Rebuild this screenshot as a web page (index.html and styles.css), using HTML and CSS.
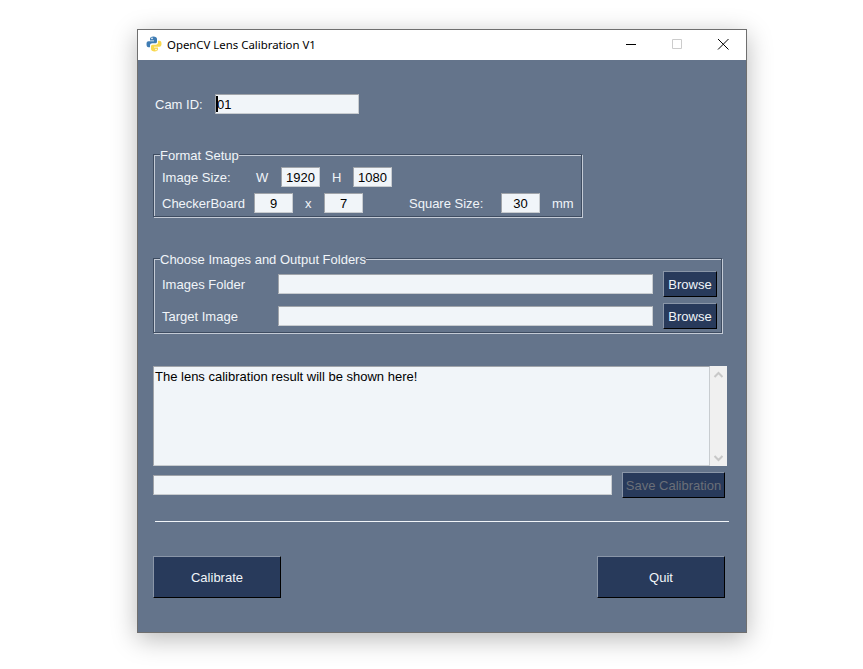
FILE: index.html
```html
<!DOCTYPE html>
<html lang="en">
<head>
    <meta charset="UTF-8">
    <meta name="viewport" content="width=device-width, initial-scale=1.0">
    <title>OpenCV Lens Calibration V1</title>
    <link rel="stylesheet" href="styles.css">
</head>
<body>
    <div class="window">
        <div class="titlebar">
            <svg class="app-icon" width="16" height="16" viewBox="0 0 16 16">
                <path fill="#3f7cb3" d="M7.5 0.5C5 0.5 4 1.5 4 3v1.500h4v0.800H2.500C1 5.300 0.500 6.500 0.500 8.200c0 1.800 0.700 3 2 3H4V9.500c0-1.300 1-2.200 2.300-2.200h3C10.500 7.300 11 6.500 11 5.500V3c0-1.500-1.500-2.500-3.500-2.500z"/>
                <path fill="#f9d84e" d="M8.500 15.500c2.500 0 3.500-1 3.500-2.500v-1.500H8v-0.800h5.500c1.500 0 2-1.200 2-2.900 0-1.800-0.700-3-2-3H12v1.700c0 1.300-1 2.200-2.300 2.200h-3C5.500 8.700 5 9.500 5 10.500V13c0 1.500 1.500 2.500 3.500 2.500z"/>
                <circle cx="6" cy="2.400" r="0.800" fill="#fff"/>
                <circle cx="10" cy="13.600" r="0.800" fill="#fff"/>
            </svg>
            <span class="title-text">OpenCV Lens Calibration V1</span>
            <div class="window-controls">
                <svg class="ctl" width="46" height="30" viewBox="0 0 46 30"><path d="M18 14.500h10" stroke="#000" fill="none"/></svg>
                <svg class="ctl" width="46" height="30" viewBox="0 0 46 30"><path d="M18.500 9.500h9v9h-9z" stroke="#ccc" fill="none"/></svg>
                <svg class="ctl" width="46" height="30" viewBox="0 0 46 30"><path d="M18 9l10.500 10.500M28.500 9L18 19.500" stroke="#000" fill="none"/></svg>
            </div>
        </div>

        <div class="content">
            <div class="cam-row">
                <label class="cam-label" for="camId">Cam ID:</label>
                <div class="cam-field">
                    <input class="field cam-input" type="text" id="camId" value="01">
                    <span class="caret"></span>
                </div>
            </div>

            <fieldset class="group format-group">
                <legend>Format Setup</legend>
                <div class="row size-row">
                    <span class="lbl lbl-size">Image Size:</span>
                    <span class="lbl lbl-w">W</span>
                    <input class="field num" type="text" value="1920">
                    <span class="lbl lbl-h">H</span>
                    <input class="field num" type="text" value="1080">
                </div>
                <div class="row board-row">
                    <span class="lbl lbl-board">CheckerBoard</span>
                    <input class="field num" type="text" value="9">
                    <span class="lbl lbl-x">x</span>
                    <input class="field num" type="text" value="7">
                    <span class="lbl lbl-square">Square Size:</span>
                    <input class="field num" type="text" value="30">
                    <span class="lbl lbl-mm">mm</span>
                </div>
            </fieldset>

            <fieldset class="group folder-group">
                <legend>Choose Images and Output Folders</legend>
                <div class="row folder-row">
                    <span class="lbl lbl-folder">Images Folder</span>
                    <input class="field path" type="text">
                    <button class="btn browse" type="button">Browse</button>
                </div>
                <div class="row folder-row">
                    <span class="lbl lbl-folder">Target Image</span>
                    <input class="field path" type="text">
                    <button class="btn browse" type="button">Browse</button>
                </div>
            </fieldset>

            <div class="output">
                <div class="output-text">The lens calibration result will be shown here!</div>
                <div class="scrollbar">
                    <svg width="17" height="17" viewBox="0 0 17 17"><path d="M4.500 11l4-4 4 4" stroke="#c8c8c8" stroke-width="2" fill="none"/></svg>
                    <svg width="17" height="17" viewBox="0 0 17 17"><path d="M4.500 7l4 4 4-4" stroke="#c8c8c8" stroke-width="2" fill="none"/></svg>
                </div>
            </div>

            <div class="save-row">
                <input class="field save-path" type="text">
                <button class="btn save" type="button" disabled>Save Calibration</button>
            </div>

            <div class="separator"></div>

            <div class="actions">
                <button class="btn big" type="button">Calibrate</button>
                <button class="btn big" type="button">Quit</button>
            </div>
        </div>
    </div>
</body>
</html>
```

FILE: styles.css
```css
body {
    margin: 0;
    height: 669px;
    overflow: hidden;
    background: #fff;
    font-family: "Liberation Sans", Arial, sans-serif;
    font-size: 13px;
}

.window {
    width: 610px;
    height: 604px;
    margin: 29px 0 0 137px;
    box-sizing: border-box;
    border: 1px solid #6f6f6f;
    background: #64748b;
    box-shadow: 0 6px 24px rgba(0, 0, 0, 0.28);
}

/* title bar */
.titlebar {
    height: 30px;
    display: flex;
    align-items: center;
    background: #fff;
}
.app-icon {
    margin: 0 0 2px 8px;
}
.title-text {
    margin: 0 0 2px 5px;
    font-family: "Noto Sans", sans-serif;
    font-size: 11.4px;
    color: #000;
}
.window-controls {
    margin-left: auto;
    display: flex;
}
.ctl {
    display: block;
}

.content {
    padding: 34px 0 0 15px;
    color: #f1f5f9;
}

/* shared pieces */
.field {
    box-sizing: border-box;
    height: 20px;
    padding: 0 1px;
    background: #f1f5f9;
    border: 1px solid;
    border-color: #a0a4aa #c8ccd0 #c8ccd0 #a0a4aa;
    border-radius: 0;
    font-family: "Liberation Sans", Arial, sans-serif;
    font-size: 13px;
    color: #000;
    outline: none;
}
.num {
    width: 39px;
    text-align: center;
}
.lbl {
    flex: none;
}
.row {
    display: flex;
    align-items: center;
}
.btn {
    box-sizing: border-box;
    padding: 0;
    background: #283a5b;
    color: #f1f5f9;
    font-family: "Liberation Sans", Arial, sans-serif;
    font-size: 13px;
    white-space: nowrap;
    border: 1px solid;
    border-color: #8a96a8 #000 #000 #8a96a8;
    border-radius: 0;
}

/* cam id */
.cam-row {
    display: flex;
    align-items: center;
    height: 20px;
}
.cam-label {
    margin-left: 2px;
    width: 60px;
}
.cam-field {
    position: relative;
}
.cam-input {
    display: block;
    width: 144px;
}
.caret {
    position: absolute;
    left: 1px;
    top: 2px;
    width: 2px;
    height: 16px;
    background: #000;
}

/* group boxes */
.group {
    box-sizing: border-box;
    margin: 0;
    min-width: 0;
    padding: 0 0 0 8px;
    border: 1px solid #3e4c61;
    box-shadow: 1px 1px 0 #c4cbd6, inset 1px 1px 0 #c4cbd6;
}
.group legend {
    margin-left: -2px;
    padding: 3px 0 0 0;
    line-height: 16px;
    color: #f1f5f9;
    background: #64748b;
}
.format-group {
    width: 429px;
    height: 72px;
    margin-top: 31px;
}
.folder-group {
    width: 569px;
    height: 84px;
    margin-top: 32px;
}

.size-row {
    height: 20px;
    margin-top: 3px;
}
.board-row {
    height: 20px;
    margin-top: 6px;
}
.lbl-size {
    width: 94px;
}
.lbl-w {
    width: 25px;
}
.lbl-h {
    width: 33px;
    padding-left: 12px;
    box-sizing: border-box;
}
.lbl-board {
    width: 92px;
}
.lbl-x {
    width: 31px;
    padding-left: 12px;
    box-sizing: border-box;
}
.lbl-square {
    width: 138px;
    padding-left: 46px;
    box-sizing: border-box;
}
.lbl-mm {
    padding-left: 12px;
}

.folder-row {
    height: 26px;
}
.folder-row:first-of-type {
    margin-top: 3px;
}
.folder-row + .folder-row {
    margin-top: 6px;
}
.lbl-folder {
    width: 116px;
}
.path {
    width: 375px;
}
.browse {
    width: 54px;
    height: 26px;
    margin-left: 10px;
}

/* output box */
.output {
    display: flex;
    width: 574px;
    height: 100px;
    margin: 33px 0 0 0;
}
.output-text {
    box-sizing: border-box;
    width: 557px;
    padding: 2px 1px 1px;
    background: #f1f5f9;
    border: 1px solid;
    border-color: #a0a4aa #c8ccd0 #c8ccd0 #a0a4aa;
    color: #000;
}
.scrollbar {
    width: 17px;
    display: flex;
    flex-direction: column;
    justify-content: space-between;
    background: #f0f0f0;
}
.scrollbar svg {
    display: block;
}

.save-row {
    display: flex;
    align-items: center;
    height: 26px;
    margin-top: 6px;
}
.save-path {
    width: 459px;
}
.save {
    width: 103px;
    height: 26px;
    margin-left: 10px;
    color: #6a6f78;
}

.separator {
    width: 574px;
    height: 1px;
    margin: 23px 0 0 2px;
    background: #f1f5f9;
}

.actions {
    display: flex;
    justify-content: space-between;
    width: 572px;
    margin-top: 34px;
}
.big {
    width: 128px;
    height: 42px;
}
```
